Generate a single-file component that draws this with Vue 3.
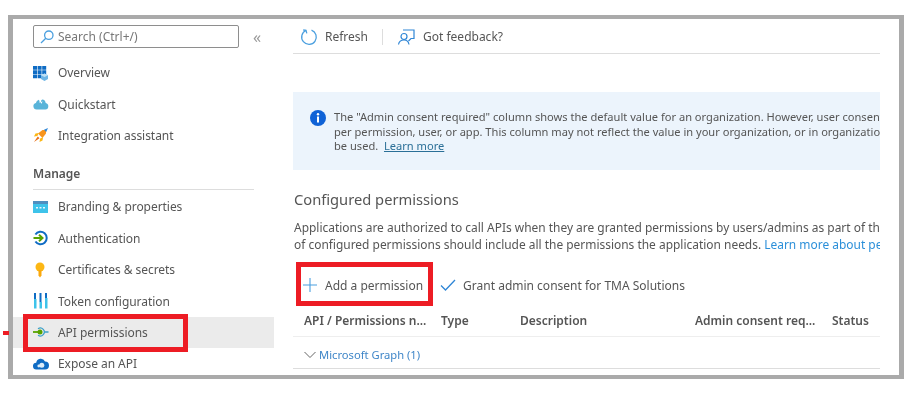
<script setup>
const topItems = [
  { key: 'overview', label: 'Overview' },
  { key: 'quickstart', label: 'Quickstart' },
  { key: 'assistant', label: 'Integration assistant' },
]
const manageItems = [
  { key: 'branding', label: 'Branding & properties' },
  { key: 'auth', label: 'Authentication' },
  { key: 'certs', label: 'Certificates & secrets' },
  { key: 'token', label: 'Token configuration' },
  { key: 'api', label: 'API permissions', active: true },
  { key: 'expose', label: 'Expose an API' },
]
</script>

<template>
  <div class="page">
    <div class="tick"></div>
    <div class="frame">
      <aside class="sidebar">
        <div class="search-row">
          <div class="search">
            <svg width="16" height="16" viewBox="0 0 16 16" fill="none" stroke="#4a9fdf" stroke-width="1.3">
              <circle cx="9.8" cy="6.2" r="4.2" />
              <path d="M6.8 9.2 2 14" />
            </svg>
            <span>Search (Ctrl+/)</span>
          </div>
          <span class="collapse">«</span>
        </div>

        <div v-for="item in topItems" :key="item.key" class="nav-item">
          <span class="nav-icon">
            <svg v-if="item.key === 'overview'" width="16" height="16" viewBox="0 0 16 16">
              <path fill="#0f6cc4" d="M0 1h4v3.700H0zM4.600 1h4v3.700h-4zM9.200 1h4v3.700h-4zM0 5.300h4V9H0zM4.600 5.300h4V9h-4zM9.200 5.300h4V9h-4zM0 9.600h4v3.700H0zM4.600 9.600h4v3.700h-4z" />
              <path fill="#6fb6e6" d="m11.500 8.500 3.500 1.800v3.700l-3.500 2L8 14v-3.700z" />
              <path fill="#bfe0f5" d="M11.500 8.500 15 10.300l-3.500 1.800L8 10.300z" />
            </svg>
            <svg v-else-if="item.key === 'quickstart'" width="16" height="16" viewBox="0 0 16 16">
              <path fill="#59b4d9" d="M3.600 13.500a3.300 3.300 0 0 1-.7-6.500 4 4 0 0 1 3-3.300L7 6.200l1.200-1.800 1-1A4 4 0 0 1 12.700 7a3.300 3.300 0 0 1-.3 6.500z" />
              <path fill="#fff" d="m7.200 3 1.100 3 1.300-.8L8.400 8 7.800 6.200l-1.300.8z" />
            </svg>
            <svg v-else width="16" height="16" viewBox="0 0 16 16">
              <path fill="#f7941d" d="M5 6.500 9.500 3l3.500 0v3.500L9.500 11z" />
              <path fill="#2f86d6" d="m11 2.800 4-1.800-1.800 4z" />
              <path fill="#fcb714" d="m5.800 5.900-3.300.6-1.500 3 3.400-.6zM10.100 10.200l-.6 3.300-3 1.500.6-3.400z" />
              <path fill="#e8701a" d="M4.800 9.500 1 15l5.500-3.800z" />
            </svg>
          </span>
          <span class="nav-label">{{ item.label }}</span>
        </div>

        <div class="section">Manage</div>

        <div v-for="item in manageItems" :key="item.key" class="nav-item" :class="{ active: item.active }">
          <span class="nav-icon">
            <svg v-if="item.key === 'branding'" width="16" height="16" viewBox="0 0 16 16">
              <path fill="#3ec3ea" d="M0 2h15v12H0z" />
              <path fill="#4f8fc0" d="M0 2h15v3H0z" />
              <path fill="#e8f8fd" d="M3 8h2v1.500H3zM6.500 8h2v1.500h-2zM10 8h2v1.500h-2z" />
            </svg>
            <svg v-else-if="item.key === 'auth'" width="16" height="16" viewBox="0 0 16 16" fill="none">
              <path stroke="#0f6cc4" stroke-width="2" d="M2.400 4.500a6.200 6.200 0 1 1 0 7" />
              <path stroke="#57a300" stroke-width="2" d="M0.500 8h8.500M6 4.800 9.500 8 6 11.200" />
            </svg>
            <svg v-else-if="item.key === 'certs'" width="16" height="16" viewBox="0 0 16 16">
              <circle cx="7" cy="5" r="4.500" fill="#fcb714" />
              <path fill="#f9a80e" d="M5.500 8h3v5.500L7 15.500l-1.500-2z" />
            </svg>
            <svg v-else-if="item.key === 'token'" width="16" height="16" viewBox="0 0 16 16">
              <path fill="#0f6cc4" d="M1 0h2v6H1zM6.500 0h2v9h-2zM12 0h2v5h-2z" />
              <path fill="#3ec3ea" d="M1 6h2.500v9.500H1zM6.500 9H9v6.500H6.500zM12 5h2.500v10.500H12z" />
            </svg>
            <svg v-else-if="item.key === 'api'" width="16" height="16" viewBox="0 0 16 16" fill="none">
              <path stroke="#3ca0c8" stroke-width="1.300" d="M5 4.700a4 4 0 1 1 0 6.600M12 8h3.500" />
              <path stroke="#57a300" stroke-width="1.800" d="M0 8h8" />
              <circle cx="7" cy="8" r="2.500" fill="#57a300" />
            </svg>
            <svg v-else width="16" height="16" viewBox="0 0 16 16">
              <path fill="#0f6cc4" d="M3.600 13.500a3.400 3.400 0 0 1-.4-6.800A4.600 4.600 0 0 1 12 5.500a4 4 0 0 1 0 8z" />
              <circle cx="8.800" cy="9.300" r="2.500" fill="#dcedf9" />
              <circle cx="5.800" cy="10" r="1.400" fill="#dcedf9" />
            </svg>
          </span>
          <span class="nav-label">{{ item.label }}</span>
        </div>

        <div class="red-box nav-mark"></div>
      </aside>

      <main class="content">
        <div class="commandbar">
          <span class="command">
            <svg width="18" height="18" viewBox="0 0 18 18" fill="none" stroke="#4a9fdf" stroke-width="1.300">
              <path d="M6 2.400a7.300 7.300 0 1 0 5.500-.2" />
              <path d="M6.800 5.300 6 2.300 3.200 2" />
            </svg>
            <span>Refresh</span>
          </span>
          <span class="divider"></span>
          <span class="command feedback">
            <svg width="18" height="18" viewBox="0 0 18 18" fill="none" stroke="#2f86d6" stroke-width="1.200">
              <circle cx="7" cy="8.500" r="3" />
              <path d="M1.500 16.500C2 13.500 4 12 7 12s4.500 1.500 5 4.500M6 2h11v8.500h-3L11.500 13" />
            </svg>
            <span>Got feedback?</span>
          </span>
        </div>

        <div class="banner">
          <svg class="info" width="16" height="16" viewBox="0 0 16 16">
            <circle cx="8" cy="8" r="8" fill="#0f62d6" />
            <circle cx="8" cy="4.300" r="1.200" fill="#fff" />
            <path fill="#fff" d="M7 6.600h2v6H7z" />
          </svg>
          <div class="banner-text">
            <div>The "Admin consent required" column shows the default value for an organization. However, user consent can be customized</div>
            <div>per permission, user, or app. This column may not reflect the value in your organization, or in organizations where this app will</div>
            <div>be used.&nbsp; <a class="banner-link">Learn more</a></div>
          </div>
        </div>

        <h2 class="title">Configured permissions</h2>
        <div class="desc">
          <div>Applications are authorized to call APIs when they are granted permissions by users/admins as part of the consent process. The list</div>
          <div>of configured permissions should include all the permissions the application needs. <a class="link">Learn more about permissions</a></div>
        </div>

        <div class="actions">
          <span class="action add">
            <svg width="16" height="16" viewBox="0 0 16 16" stroke="#4a9fdf" stroke-width="1.100">
              <path d="M8 1v14M1 8h14" />
            </svg>
            <span>Add a permission</span>
          </span>
          <span class="action grant">
            <svg width="16" height="16" viewBox="0 0 16 16" fill="none" stroke="#2f86d6" stroke-width="1.300">
              <path d="M1 8.500 5.500 13 15 3" />
            </svg>
            <span>Grant admin consent for TMA Solutions</span>
          </span>
          <div class="red-box add-mark"></div>
        </div>

        <div class="thead">
          <span class="col-api">API / Permissions n...</span>
          <span class="col-type">Type</span>
          <span class="col-desc">Description</span>
          <span class="col-admin">Admin consent req...</span>
          <span>Status</span>
        </div>
        <div class="group">
          <svg width="14" height="14" viewBox="0 0 14 14" fill="none" stroke="#666" stroke-width="1">
            <path d="M1.500 4 7 9.500 12.500 4" />
          </svg>
          <span>Microsoft Graph (1)</span>
        </div>
      </main>
    </div>
  </div>
</template>

<style>
html, body { margin: 0; background: #fff; }
</style>

<style scoped>
.page {
  position: relative;
  width: 912px;
  height: 401px;
  padding: 15px 0 0 8px;
  box-sizing: border-box;
  overflow: hidden;
  font-family: "Noto Sans", "Open Sans", sans-serif;
  font-size: 12px;
  color: #555;
  background: #fff;
  filter: blur(0.35px);
}
.tick {
  position: absolute;
  left: 3px;
  top: 331px;
  width: 6px;
  height: 4px;
  background: #ed1c24;
}
.frame {
  display: flex;
  width: 896px;
  height: 364px;
  box-sizing: border-box;
  border: 4px solid #aaa;
  border-left-width: 5px;
  border-right-width: 5px;
  overflow: hidden;
}
.sidebar {
  position: relative;
  flex: none;
  width: 261px;
  padding-top: 6px;
  box-sizing: border-box;
}
.search-row {
  display: flex;
  align-items: center;
  height: 23px;
  margin: 0 0 9px 20px;
}
.search {
  display: flex;
  align-items: center;
  gap: 3px;
  width: 206px;
  height: 23px;
  box-sizing: border-box;
  padding-left: 5px;
  border: 1px solid #8e8e8e;
  border-radius: 2px;
  color: #777;
}
.collapse {
  margin-left: 14px;
  font-size: 16px;
  line-height: 16px;
  color: #999;
}
.nav-item {
  display: flex;
  align-items: center;
  height: 31.400px;
  padding-left: 20px;
  white-space: nowrap;
}
.nav-item.active {
  background: #ebebeb;
}
.nav-icon {
  display: flex;
  width: 25px;
  flex: none;
}
.nav-label {
  letter-spacing: -0.05px;
}
.section {
  height: 31px;
  line-height: 32px;
  margin: 7px 20px 0;
  font-weight: 600;
  color: #555;
  border-bottom: 1px solid #ddd;
}
.section + .nav-item {
  margin-top: 1px;
}
.red-box {
  position: absolute;
  box-sizing: border-box;
  border: 5px solid #ed1c24;
}
.nav-mark {
  left: 10px;
  top: 295px;
  width: 165px;
  height: 38px;
}
.content {
  flex: none;
  width: 587px;
  margin-left: 19px;
  padding-top: 6px;
  overflow: hidden;
}
.commandbar {
  display: flex;
  align-items: center;
  height: 29px;
  padding-bottom: 5px;
  box-sizing: border-box;
  border-bottom: 1px solid #ddd;
}
.command {
  display: flex;
  align-items: center;
  gap: 7px;
  padding-left: 7px;
}
.feedback {
  gap: 8px;
}
.divider {
  width: 1px;
  height: 16px;
  margin: 0 7px 0 14px;
  background: #ddd;
}
.banner {
  display: flex;
  align-items: flex-start;
  height: 78px;
  margin-top: 38px;
  padding: 18px 0 0 17px;
  box-sizing: border-box;
  background: #ecf4fc;
  overflow: hidden;
}
.info {
  flex: none;
  margin: 0 8px 0 0;
}
.banner-text {
  line-height: 14.700px;
  white-space: nowrap;
  font-size: 11.100px;
}
.banner-link {
  color: #2a6f97;
  text-decoration: underline;
}
.title {
  margin: 18px 0 0 1px;
  font-size: 14.700px;
  line-height: 22px;
  font-weight: 400;
  color: #555;
}
.desc {
  margin: 10px 0 0 1px;
  line-height: 16.500px;
  white-space: nowrap;
  font-size: 11.950px;
}
.link {
  color: #2b8fd9;
}
.actions {
  position: relative;
  display: flex;
  align-items: center;
  height: 44px;
  padding-top: 2px;
  box-sizing: border-box;
  margin-top: 9px;
}
.action {
  display: flex;
  align-items: center;
}
.add {
  gap: 7px;
  padding-left: 9px;
}
.grant {
  gap: 7px;
  margin-left: 17px;
}
.add-mark {
  left: 3px;
  top: 0;
  width: 137px;
  height: 44px;
}
.thead {
  display: flex;
  align-items: center;
  height: 31px;
  padding: 0 0 2px 11px;
  box-sizing: border-box;
  border-bottom: 1px solid #eee;
  font-weight: 600;
  white-space: nowrap;
}
.col-api { width: 137px; }
.col-type { width: 79px; }
.col-desc { width: 175px; }
.col-admin { width: 137px; }
.group {
  display: flex;
  align-items: center;
  gap: 2px;
  height: 32px;
  padding: 4px 0 0 10px;
  box-sizing: border-box;
  border-bottom: 1px solid #ddd;
  color: #3f86c8;
  font-size: 11.200px;
}
</style>
